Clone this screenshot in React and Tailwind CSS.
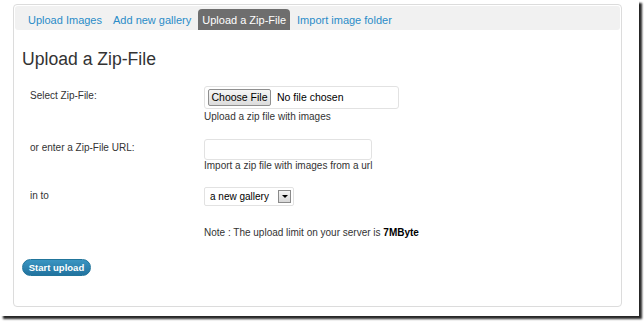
import React from "react";

const TABS = ["Upload Images", "Add new gallery", "Upload a Zip-File", "Import image folder"];

const Row = ({ label, labelPad, children }) => (
  <div className="flex">
    <div className={`w-[189px] pl-[15px] text-[10px] leading-[12px] text-[#333] ${labelPad}`}>
      {label}
    </div>
    <div className="flex flex-col">{children}</div>
  </div>
);

export default function App() {
  return (
    <div className="w-[644px] h-[322px] bg-white font-['Liberation_Sans',Arial,sans-serif]">
      <div className="w-[639px] h-[316px] bg-white shadow-[3px_3px_2px_rgba(0,0,0,0.85)] pt-[4px] pl-[13px]">
        <div className="w-[609px] h-[303px] border border-[#dcdcdc] rounded-[4px] p-[1px]">
          <div className="h-[24px] bg-[#f1f1f1] rounded-[3px] flex items-end pl-[9px] gap-[3px]">
            {TABS.map((tab, i) => (
              <div
                key={tab}
                className={`h-[21px] px-[4px] flex items-center pt-[1px] text-[11px] ${
                  i === 2 ? "bg-[#6e6e6e] text-white rounded-t-[4px]" : "text-[#2a8cc8]"
                }`}
              >
                {tab}
              </div>
            ))}
          </div>

          <h2 className="mt-[19px] pl-[7px] text-[17.6px] leading-[21px] text-[#333]">Upload a Zip-File</h2>

          <div className="mt-[16px]">
            <Row label="Select Zip-File:" labelPad="pt-[4px]">
              <div className="w-[195px] h-[23px] border border-[#e2e2e2] rounded-[3px] flex items-center pl-[3px]">
                <button className="h-[17px] w-[63px] border border-[#8f8f8f] rounded-[2px] bg-gradient-to-b from-[#f6f6f6] to-[#dcdcdc] text-[10.5px] leading-[15px] text-black">
                  Choose File
                </button>
                <span className="ml-[6px] text-[10.5px] text-black">No file chosen</span>
              </div>
              <div className="mt-[2px] text-[10px] leading-[12px] text-[#333]">Upload a zip file with images</div>
            </Row>
          </div>

          <div className="mt-[16px]">
            <Row label="or enter a Zip-File URL:" labelPad="pt-[3px]">
              <div className="w-[168px] h-[21px] border border-[#e2e2e2] rounded-[3px]" />
              <div className="mt-[0px] text-[10px] leading-[12px] text-[#333]">
                Import a zip file with images from a url
              </div>
            </Row>
          </div>

          <div className="mt-[15px]">
            <Row label="in to" labelPad="pt-[3px]">
              <div className="w-[90px] h-[19px] border border-[#e2e2e2] rounded-[2px] flex items-center justify-between pl-[5px] pr-[2px]">
                <span className="text-[10px] text-black">a new gallery</span>
                <span className="w-[13px] h-[13px] border border-[#8a8a8a] bg-gradient-to-b from-[#f4f4f4] to-[#d8d8d8] flex items-center justify-center">
                  <span className="w-0 h-0 border-l-[3px] border-r-[3px] border-t-[3px] border-l-transparent border-r-transparent border-t-black" />
                </span>
              </div>
              <div className="mt-[21px] text-[10px] leading-[12px] text-[#333]">
                Note : The upload limit on your server is <b className="text-black">7MByte</b>
              </div>
            </Row>
          </div>

          <div className="mt-[20px] pl-[7px] flex">
            <button className="h-[17px] w-[69px] rounded-full border border-[#21759b] bg-gradient-to-b from-[#3a95c2] to-[#21739f] text-white text-[9.5px] font-bold leading-[15px]">
              Start upload
            </button>
          </div>
        </div>
      </div>
    </div>
  );
}
